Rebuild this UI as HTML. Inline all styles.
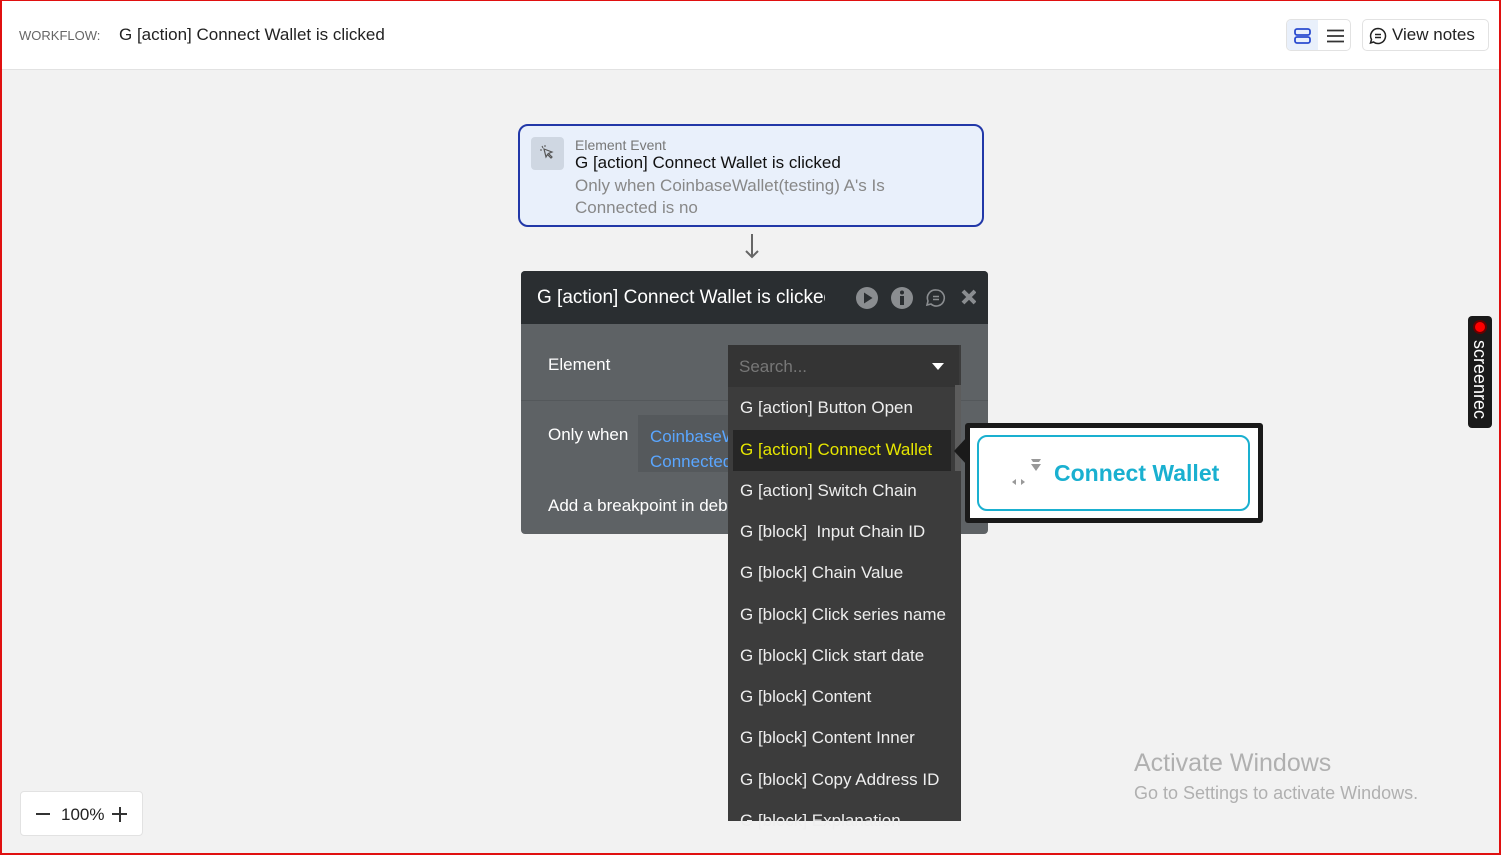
<!DOCTYPE html>
<html><head><meta charset="utf-8"><style>
*{box-sizing:border-box;margin:0;padding:0}
body{width:1501px;height:855px;overflow:hidden;font-family:"Liberation Sans",sans-serif;background:#f2f2f2;position:relative}
.frame{position:absolute;inset:0;border:2px solid #e01010;border-top-width:1px;z-index:50;pointer-events:none}
.hdr{position:absolute;left:0;top:0;width:1501px;height:70px;background:#fff;border-bottom:1px solid #e2e2e2}
.abs{position:absolute}
.ev{left:518px;top:124px;width:466px;height:103px;background:#e9f0fb;border:2px solid #2238a8;border-radius:10px}
.pnl{left:521px;top:271px;width:467px;height:263px;background:#5e6265;border-radius:4px;overflow:hidden}
.dd{left:728px;top:345px;width:233px;height:476px;background:#3c3c3c}
.it{position:absolute;left:12px;color:#eee;font-size:17px;white-space:nowrap}
</style></head><body>
<div class="hdr">
 <div class="abs" style="left:19px;top:28px;font-size:13px;color:#666">WORKFLOW:</div>
 <div class="abs" style="left:119px;top:25px;font-size:17px;color:#222">G [action] Connect Wallet is clicked</div>
 <div class="abs" style="left:1286px;top:19px;width:65px;height:32px;border:1px solid #e2e2e2;border-radius:5px;overflow:hidden">
  <div class="abs" style="left:0;top:0;width:31px;height:32px;background:#e9f0fb"></div>
  <svg class="abs" style="left:7px;top:8px" width="18" height="16"><rect x="1" y="1" width="15" height="6" rx="2" fill="none" stroke="#2a4bd0" stroke-width="1.8"/><rect x="1" y="9" width="15" height="6" rx="2" fill="none" stroke="#2a4bd0" stroke-width="1.8"/></svg>
  <svg class="abs" style="left:40px;top:9px" width="17" height="14"><path d="M0 1.5H17M0 7H17M0 12.5H17" stroke="#333" stroke-width="1.8"/></svg>
 </div>
 <div class="abs" style="left:1362px;top:19px;width:127px;height:32px;border:1px solid #e2e2e2;border-radius:5px"></div>
 <svg class="abs" style="left:1369px;top:27px" width="18" height="18"><path d="M9 1.5a7.5 7.5 0 1 1-4.5 13.5L1.5 16l1-3.5A7.5 7.5 0 0 1 9 1.5z" fill="none" stroke="#222" stroke-width="1.5"/><path d="M6 7.5h6M6 10.5h6" stroke="#222" stroke-width="1.4"/></svg>
 <div class="abs" style="left:1392px;top:25px;font-size:17px;color:#222">View notes</div>
</div>

<div class="abs ev">
 <div class="abs" style="left:11px;top:11px;width:33px;height:33px;background:#cfd7e2;border-radius:4px"></div>
 <svg class="abs" style="left:20px;top:19px" width="16" height="16"><path d="M4 4l8 3-3.5 1.5L12 12l-1 1-3.5-3.5L6 12z" fill="none" stroke="#555" stroke-width="1.2"/><path d="M2 1l1 2M0 5h2M5 0l0 2" stroke="#555" stroke-width="1"/></svg>
 <div class="abs" style="left:55px;top:11px;font-size:14px;color:#777">Element Event</div>
 <div class="abs" style="left:55px;top:27px;font-size:17px;color:#111">G [action] Connect Wallet is clicked</div>
 <div class="abs" style="left:55px;top:49px;font-size:17px;color:#888;line-height:22px">Only when CoinbaseWallet(testing) A's Is<br>Connected is no</div>
</div>
<svg class="abs" style="left:744px;top:234px" width="16" height="26"><path d="M8 0V23M2 17l6 6 6-6" fill="none" stroke="#666" stroke-width="2"/></svg>

<div class="abs pnl">
 <div class="abs" style="left:0;top:0;width:467px;height:53px;background:#2a2e31"></div>
 <div class="abs" style="left:16px;top:16px;font-size:19px;color:#fff;width:288px;overflow:hidden;white-space:nowrap">G [action] Connect Wallet is clicked</div>
 <svg class="abs" style="left:335px;top:16px" width="120" height="22"><circle cx="11" cy="11" r="11" fill="#8a8d90"/><path d="M8 5.5v11l8.5-5.5z" fill="#2a2e31"/><circle cx="46" cy="11" r="11" fill="#8a8d90"/><rect x="44" y="9" width="4" height="9" fill="#2a2e31"/><circle cx="46" cy="5.5" r="2" fill="#2a2e31"/><path d="M80 3a8 8 0 1 1-5 14l-4 1 1-4A8 8 0 0 1 80 3z" fill="none" stroke="#8a8d90" stroke-width="1.6"/><path d="M77 9.5h6M77 12.5h6" stroke="#8a8d90" stroke-width="1.4"/><path d="M107 4l12 12M119 4l-12 12" stroke="#8a8d90" stroke-width="4"/></svg>
 <div class="abs" style="left:27px;top:84px;font-size:17px;color:#fff">Element</div>
 <div class="abs" style="left:0;top:129px;width:467px;height:1px;background:#54585b"></div>
 <div class="abs" style="left:27px;top:154px;font-size:17px;color:#fff">Only when</div>
 <div class="abs" style="left:117px;top:144px;width:100px;height:57px;background:#55595c"></div>
 <div class="abs" style="left:129px;top:153px;font-size:17px;color:#5aa6ff;line-height:25px">CoinbaseWallet<br>Connected</div>
 <div class="abs" style="left:27px;top:225px;font-size:17px;color:#fff">Add a breakpoint in debug</div>
</div>

<div class="abs dd">
 <div class="abs" style="left:0;top:0;width:231px;height:42px;background:#343434"></div>
 <div class="abs" style="left:11px;top:12px;font-size:17px;color:#777">Search...</div>
 <svg class="abs" style="left:204px;top:18px" width="12" height="7"><path d="M0 0h12L6 7z" fill="#fff"/></svg>
 <div class="abs" style="left:227px;top:40px;width:6px;height:86px;background:#5c5c5c"></div>
 <div class="abs" style="left:5px;top:85px;width:218px;height:41px;background:#262626"></div>
 <div class="it" style="top:53px">G [action] Button Open</div>
 <div class="it" style="top:95px;color:#e6e600">G [action] Connect Wallet</div>
 <div class="it" style="top:136px">G [action] Switch Chain</div>
 <div class="it" style="top:177px">G [block]&nbsp; Input Chain ID</div>
 <div class="it" style="top:218px">G [block] Chain Value</div>
 <div class="it" style="top:260px">G [block] Click series name</div>
 <div class="it" style="top:301px">G [block] Click start date</div>
 <div class="it" style="top:342px">G [block] Content</div>
 <div class="it" style="top:383px">G [block] Content Inner</div>
 <div class="it" style="top:425px">G [block] Copy Address ID</div>
 <div class="it" style="top:466px">G [block] Explanation</div>
</div>

<svg class="abs" style="left:954px;top:437px" width="13" height="28"><path d="M13 0L0 14l13 14z" fill="#1a1a1a"/></svg>
<div class="abs" style="left:965px;top:423px;width:298px;height:100px;background:#1a1a1a;border-radius:3px"></div>
<div class="abs" style="left:970px;top:428px;width:288px;height:90px;background:#fff"></div>
<div class="abs" style="left:977px;top:435px;width:273px;height:76px;border:2px solid #1ab0d0;border-radius:10px"></div>
<svg class="abs" style="left:1010px;top:456px" width="34" height="34"><path d="M21 3h10l-2 3h-6zM21 8h10l-5 7z" fill="#999"/><path d="M2 26l4-3v6zM15 26l-4-3v6z" fill="#999"/></svg>
<div class="abs" style="left:1054px;top:460px;font-size:23px;font-weight:bold;color:#1ab0d0">Connect Wallet</div>

<div class="abs" style="left:1468px;top:316px;width:24px;height:112px;background:#1a1a1a;border-radius:4px"></div>
<div class="abs" style="left:1473px;top:320px;width:14px;height:14px;border-radius:50%;background:#f00;border:2px solid #600"></div>
<div class="abs" style="left:1470px;top:340px;writing-mode:vertical-rl;font-size:18px;color:#fff;line-height:20px">screenrec</div>

<div class="abs" style="left:20px;top:791px;width:123px;height:45px;background:#fff;border:1px solid #e2e2e2;border-radius:4px"></div>
<div class="abs" style="left:36px;top:813px;width:14px;height:2px;background:#333"></div>
<div class="abs" style="left:61px;top:805px;font-size:17px;color:#222">100%</div>
<div class="abs" style="left:112px;top:813px;width:15px;height:2px;background:#333"></div>
<div class="abs" style="left:118.5px;top:807px;width:2px;height:15px;background:#333"></div>

<div class="abs" style="left:1134px;top:749px;font-size:25px;color:#b0b0b0">Activate Windows</div>
<div class="abs" style="left:1134px;top:783px;font-size:18px;color:#b0b0b0">Go to Settings to activate Windows.</div>
<div class="frame"></div>
</body></html>
